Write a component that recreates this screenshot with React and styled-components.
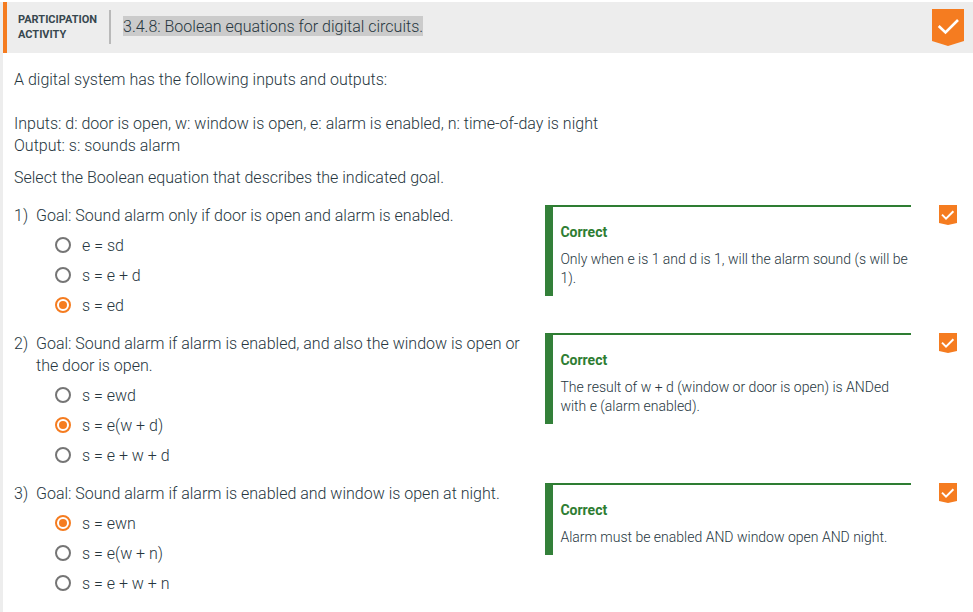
import React from "react";
import styled, { createGlobalStyle } from "styled-components";

const GlobalStyle = createGlobalStyle`
  * { box-sizing: border-box; }
  body {
    margin: 0;
    background: #fff;
    color: #26363e;
    font: 300 16px/22px Roboto, sans-serif;
    overflow: hidden;
  }
`;

const Activity = styled.main`
  height: 610px;
  margin-top: 2px;
  border-left: 3px solid #ededed;
`;

const Header = styled.header`
  display: flex;
  height: 51px;
  background: #ededed;
  border-left: 4px solid #f57c20;
`;

const Kind = styled.div`
  width: 104px;
  height: 34px;
  margin-top: 8px;
  padding: 2px 0 0 11px;
  border-right: 2px solid #b9b9b9;
  color: #37474f;
  font-size: 11px;
  line-height: 15px;
  font-weight: 700;
`;

const Title = styled.h1`
  flex: 1;
  margin: 13px 0 0 12px;
  font-size: 16px;
  line-height: 22px;
  font-weight: 300;
`;

const Highlight = styled.span`
  display: inline-block;
  height: 20px;
  line-height: 21px;
  margin-top: 1px;
  background: #cbcbcb;
  white-space: nowrap;
`;

const HeaderBadge = styled.div`
  margin: 7px 9px 0 0;
`;

const Body = styled.div`
  padding: 16px 16px 0 11px;
`;

const Intro = styled.p`
  margin: 0 0 ${(p) => p.$gap}px;
  white-space: pre-line;
`;

const Question = styled.section`
  display: grid;
  grid-template-columns: 22px 509px 366px 1fr;
  margin-bottom: 12px;
`;

const Prompt = styled.div`
  white-space: pre;
`;

const Options = styled.div`
  margin: 4px 0 0 19px;
`;

const Option = styled.div`
  display: flex;
  align-items: center;
  height: 30px;
`;

const Radio = styled.span`
  display: grid;
  place-items: center;
  width: 16px;
  height: 16px;
  margin: 0 11px 2px 0;
  border: 2px solid ${(p) => (p.$on ? "#f57c20" : "#757575")};
  border-radius: 50%;

  &::after {
    content: "";
    width: 8px;
    height: 8px;
    border-radius: 50%;
    background: ${(p) => (p.$on ? "#f57c20" : "transparent")};
  }
`;

const Feedback = styled.aside`
  align-self: start;
  height: ${(p) => p.$height}px;
  padding: 16px 0 0 7.4px;
  border-top: 2px solid #2e7d32;
  border-left: 8px solid #338039;
  font-size: 14px;
  line-height: 19px;
  white-space: pre;
`;

const Verdict = styled.div`
  margin-bottom: 8px;
  color: #2e7d32;
  font-weight: 700;
`;

const RowBadge = styled.div`
  justify-self: end;
`;

const Svg = styled.svg`
  display: block;
`;

function LargeBadge() {
  return (
    <Svg width="32" height="37" viewBox="0 0 32 37">
      <path d="M0 0H32V32L16 37L0 32Z" fill="#f57c20" />
      <path d="M6.7 17L13.5 23.5L26 11" fill="none" stroke="#fff" strokeWidth="2.6" />
    </Svg>
  );
}

function SmallBadge() {
  return (
    <Svg width="18" height="20" viewBox="0 0 18 20">
      <path d="M0 0H18V18L9 20L0 18Z" fill="#f57c20" />
      <path d="M3 9.6L7 13.6L14.4 6.2" fill="none" stroke="#fff" strokeWidth="2" />
    </Svg>
  );
}

const questions = [
  {
    prompt: "Goal: Sound alarm only if door is open and alarm is enabled.",
    options: ["e = sd", "s = e + d", "s = ed"],
    selected: 2,
    explanation: "Only when e is 1 and d is 1, will the alarm sound (s will be\n1).",
    height: 91,
  },
  {
    prompt: "Goal: Sound alarm if alarm is enabled, and also the window is open or\nthe door is open.",
    options: ["s = ewd", "s = e(w + d)", "s = e + w + d"],
    selected: 1,
    explanation: "The result of w + d (window or door is open) is ANDed\nwith e (alarm enabled).",
    height: 91,
  },
  {
    prompt: "Goal: Sound alarm if alarm is enabled and window is open at night.",
    options: ["s = ewn", "s = e(w + n)", "s = e + w + n"],
    selected: 0,
    explanation: "Alarm must be enabled AND window open AND night.",
    height: 72,
  },
];

export default function App() {
  return (
    <>
      <GlobalStyle />
      <Activity>
        <Header>
          <Kind>PARTICIPATION<br />ACTIVITY</Kind>
          <Title><Highlight>3.4.8: Boolean equations for digital circuits.</Highlight></Title>
          <HeaderBadge><LargeBadge /></HeaderBadge>
        </Header>
        <Body>
          <Intro $gap={22}>A digital system has the following inputs and outputs:</Intro>
          <Intro $gap={10}>
            {"Inputs: d: door is open, w: window is open, e: alarm is enabled, n: time-of-day is night\nOutput: s: sounds alarm"}
          </Intro>
          <Intro $gap={16}>Select the Boolean equation that describes the indicated goal.</Intro>
          {questions.map((q, i) => (
            <Question key={i}>
              <span>{i + 1})</span>
              <div>
                <Prompt>{q.prompt}</Prompt>
                <Options>
                  {q.options.map((text, j) => (
                    <Option key={text}>
                      <Radio $on={j === q.selected} />
                      <span>{text}</span>
                    </Option>
                  ))}
                </Options>
              </div>
              <Feedback $height={q.height}>
                <Verdict>Correct</Verdict>
                {q.explanation}
              </Feedback>
              <RowBadge><SmallBadge /></RowBadge>
            </Question>
          ))}
        </Body>
      </Activity>
    </>
  );
}
